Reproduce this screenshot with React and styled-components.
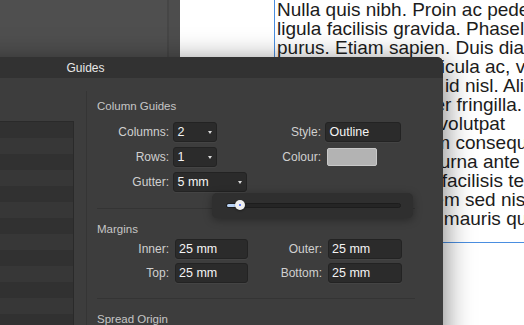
import React from 'react';
import styled, { createGlobalStyle } from 'styled-components';

const Global = createGlobalStyle`
  html, body { margin: 0; padding: 0; width: 524px; height: 325px; overflow: hidden; background: #4e4e4e; }
  #root { width: 524px; height: 325px; }
  * { box-sizing: border-box; }
`;

const Screen = styled.div`
  position: relative;
  width: 524px;
  height: 325px;
  overflow: hidden;
  display: flex;
  font-family: "Liberation Sans", Arial, sans-serif;
`;

const ToolPanel = styled.div`
  flex: none;
  width: 167px;
  background: #4f4f4f;
`;

const PanelDivider = styled.div`
  flex: none;
  width: 2px;
  background: #464646;
`;

const CanvasGutter = styled.div`
  flex: none;
  width: 11px;
  background: #4d4d4d;
`;

const Page = styled.div`
  flex: 1;
  min-width: 0;
  background: #ffffff;
  padding-left: 94px;
  overflow: hidden;
`;

const TextFrame = styled.div`
  width: 330px;
  height: 243px;
  border-left: 1px solid #4a8ee0;
  border-bottom: 1px solid #4a8ee0;
  padding-left: 2px;
  overflow: hidden;
`;

const TextLine = styled.div`
  white-space: nowrap;
  font-size: 19px;
  line-height: 19px;
  color: #1c1c1c;
`;

const Dialog = styled.div`
  position: absolute;
  top: 57px;
  left: -272px;
  width: 715px;
  height: 300px;
  display: flex;
  flex-direction: column;
  background: #3d3d3d;
  border-radius: 6px 6px 0 0;
  box-shadow: 0 6px 30px rgba(0, 0, 0, 0.55);
`;

const TitleBar = styled.div`
  flex: none;
  height: 21px;
  display: flex;
  align-items: center;
  justify-content: center;
  background: #323232;
  border-radius: 6px 6px 0 0;
  color: #e8e8e8;
  font-size: 12px;
`;

const Body = styled.div`
  flex: 1;
  display: flex;
  min-height: 0;
`;

const Sidebar = styled.div`
  flex: none;
  width: 359px;
  margin-top: 13px;
  padding: 30px 12px 0 12px;
  border-right: 1px solid #353535;
`;

const ListBox = styled.div`
  border: 1px solid #2a2a2a;
  display: flex;
  flex-direction: column;
`;

const ListRow = styled.div`
  height: 16px;
  background: ${p => (p.$odd ? '#373737' : '#313131')};
`;

const Content = styled.div`
  flex: 1;
  padding: 21px 0 0 10px;
`;

const SectionTitle = styled.div`
  font-size: 11.5px;
  line-height: 14px;
  color: #c6c6c6;
  margin-top: ${p => p.$mt || 0}px;
`;

const FormGrid = styled.div`
  display: grid;
  grid-template-columns: ${p => p.$cols};
  grid-auto-rows: 20px;
  row-gap: ${p => p.$rowGap}px;
  margin-top: ${p => p.$mt}px;
  align-items: center;
`;

const Label = styled.div`
  text-align: right;
  padding-right: ${p => p.$pad}px;
  font-size: 12px;
  color: #d0d0d0;
  white-space: nowrap;
`;

const Cell = styled.div`
  position: relative;
  height: 20px;
  display: flex;
  align-items: center;
`;

const Field = styled.div`
  width: ${p => p.$w}px;
  height: 20px;
  display: flex;
  align-items: center;
  justify-content: space-between;
  padding: 0 4px 0 3.5px;
  background: #2b2b2b;
  border: 1px solid #232323;
  border-radius: 3px;
  box-shadow: 0 1px 0 rgba(255, 255, 255, 0.04);
  color: #f4f4f4;
  font-size: 12.5px;
`;

const Caret = styled.span`
  align-self: flex-start;
  margin-top: 8px;
  width: 0;
  height: 0;
  border-left: 2.5px solid transparent;
  border-right: 2.5px solid transparent;
  border-top: 3.5px solid #dcdcdc;
`;

const Swatch = styled.div`
  margin-left: 2px;
  width: 50px;
  height: 18px;
  background: #b3b3b3;
  border: 1px solid #c9c9c9;
  border-radius: 2px;
`;

const Popover = styled.div`
  position: absolute;
  top: calc(100% + 1px);
  left: 39px;
  width: 201px;
  height: 25px;
  display: flex;
  align-items: center;
  padding: 0 12px 0 14px;
  background: #2f2f2f;
  border-radius: 5px;
  box-shadow: 0 2px 8px rgba(0, 0, 0, 0.35);
  z-index: 2;
`;

const Track = styled.div`
  position: relative;
  flex: 1;
  height: 5px;
  background: #252525;
  border: 1px solid #1d1d1d;
  border-radius: 3px;
`;

const TrackFill = styled.div`
  width: 10px;
  height: 100%;
  background: #b8d2f4;
  border-radius: 2px 0 0 2px;
`;

const Thumb = styled.div`
  position: absolute;
  left: 8px;
  top: 50%;
  width: 10px;
  height: 10px;
  margin-top: -5px;
  border-radius: 50%;
  background: #efefef;
  box-shadow: 0 1px 2px rgba(0, 0, 0, 0.4);
  display: flex;
  align-items: center;
  justify-content: center;
  &::after {
    content: '';
    width: 2px;
    height: 2px;
    border-radius: 50%;
    background: #3a5cff;
  }
`;

const Separator = styled.div`
  width: 318px;
  height: 1px;
  background: #343434;
  margin-top: ${p => p.$mt}px;
`;

const pageText = [
  'Nulla quis nibh. Proin ac pede vel',
  'ligula facilisis gravida. Phasellus',
  'purus. Etiam sapien. Duis diam',
  'urna, iaculis ut, vehicula ac, varius',
  'sit amet, mi. Donec id nisl. Aliquam',
  'erat volutpat. Integer fringilla. Duis',
  'lobortis, quam non volutpat',
  'suscipit, magna sem consequat',
  'libero, ac hendrerit urna ante id mi.',
  'Quisque commodo facilisis tellus.',
  'Integer sodales lorem sed nisl.',
  'Morbi consectetuer mauris quis',
];

const colCols = '76px 74px 78px 76px';
const marCols = '77.5px 73px 80px 74px';

export default function App() {
  return (
    <>
      <Global />
      <Screen>
        <ToolPanel />
        <PanelDivider />
        <CanvasGutter />
        <Page>
          <TextFrame>
            {pageText.map((t, i) => (
              <TextLine key={i}>{t}</TextLine>
            ))}
          </TextFrame>
        </Page>

        <Dialog>
          <TitleBar>Guides</TitleBar>
          <Body>
            <Sidebar>
              <ListBox>
                {Array.from({ length: 14 }).map((_, i) => (
                  <ListRow key={i} $odd={i % 2 === 1} />
                ))}
              </ListBox>
            </Sidebar>
            <Content>
              <SectionTitle>Column Guides</SectionTitle>
              <FormGrid $cols={colCols} $rowGap={5} $mt={8.5}>
                <Label $pad={4}>Columns:</Label>
                <Cell>
                  <Field $w={44}>
                    <span>2</span>
                    <Caret />
                  </Field>
                </Cell>
                <Label $pad={4}>Style:</Label>
                <Cell>
                  <Field $w={76}>
                    <span>Outline</span>
                  </Field>
                </Cell>

                <Label $pad={4}>Rows:</Label>
                <Cell>
                  <Field $w={44}>
                    <span>1</span>
                    <Caret />
                  </Field>
                </Cell>
                <Label $pad={4}>Colour:</Label>
                <Cell>
                  <Swatch />
                </Cell>

                <Label $pad={4}>Gutter:</Label>
                <Cell>
                  <Field $w={74}>
                    <span>5 mm</span>
                    <Caret />
                  </Field>
                  <Popover>
                    <Track>
                      <TrackFill />
                      <Thumb />
                    </Track>
                  </Popover>
                </Cell>
              </FormGrid>

              <Separator $mt={16.5} />

              <SectionTitle $mt={12.5}>Margins</SectionTitle>
              <FormGrid $cols={marCols} $rowGap={4} $mt={3}>
                <Label $pad={5.5}>Inner:</Label>
                <Cell>
                  <Field $w={73}>
                    <span>25 mm</span>
                  </Field>
                </Cell>
                <Label $pad={5.5}>Outer:</Label>
                <Cell>
                  <Field $w={74}>
                    <span>25 mm</span>
                  </Field>
                </Cell>

                <Label $pad={5.5}>Top:</Label>
                <Cell>
                  <Field $w={73}>
                    <span>25 mm</span>
                  </Field>
                </Cell>
                <Label $pad={5.5}>Bottom:</Label>
                <Cell>
                  <Field $w={74}>
                    <span>25 mm</span>
                  </Field>
                </Cell>
              </FormGrid>

              <Separator $mt={15.5} />

              <SectionTitle $mt={12.5}>Spread Origin</SectionTitle>
            </Content>
          </Body>
        </Dialog>
      </Screen>
    </>
  );
}
